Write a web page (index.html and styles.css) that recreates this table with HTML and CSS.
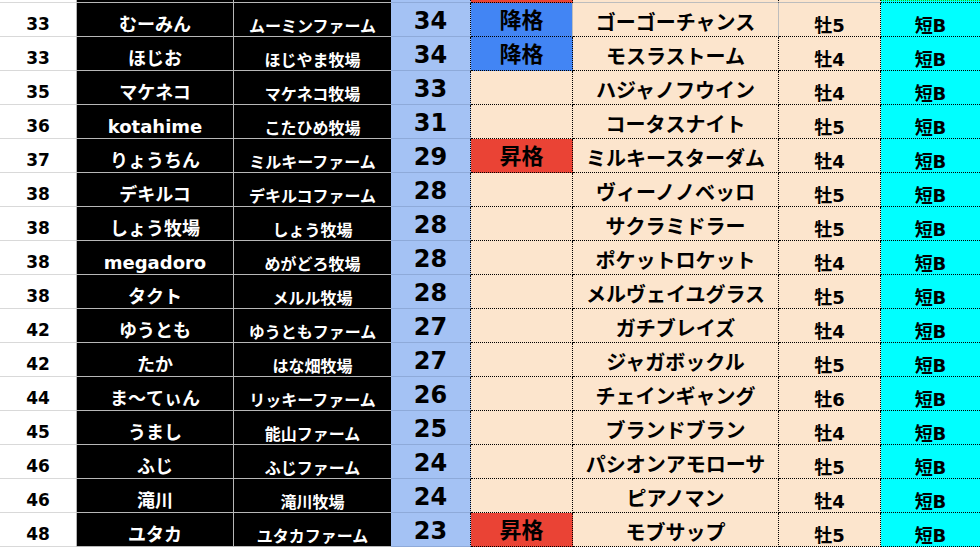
FILE: index.html
```html
<!DOCTYPE html>
<html lang="ja">
<head>
<meta charset="utf-8">
<title>Ranking</title>
<link rel="stylesheet" href="styles.css">
</head>
<body>
<div class="sheet">
  <div class="c a top"></div><div class="c b top"></div><div class="c cc top"></div><div class="c d top"></div><div class="c e up top"></div><div class="c f top"></div><div class="c g top"></div><div class="c h top"></div>

  <div class="c a r1">33</div><div class="c b">むーみん</div><div class="c cc">ムーミンファーム</div><div class="c d">34</div><div class="c e dn r1">降格</div><div class="c f r1">ゴーゴーチャンス</div><div class="c g">牡5</div><div class="c h">短B</div>
  <div class="c a">33</div><div class="c b">ほじお</div><div class="c cc">ほじやま牧場</div><div class="c d">34</div><div class="c e dn">降格</div><div class="c f">モスラストーム</div><div class="c g">牡4</div><div class="c h">短B</div>
  <div class="c a">35</div><div class="c b">マケネコ</div><div class="c cc">マケネコ牧場</div><div class="c d">33</div><div class="c e"></div><div class="c f">ハジャノフウイン</div><div class="c g">牡4</div><div class="c h">短B</div>
  <div class="c a">36</div><div class="c b">kotahime</div><div class="c cc">こたひめ牧場</div><div class="c d">31</div><div class="c e"></div><div class="c f">コータスナイト</div><div class="c g">牡5</div><div class="c h">短B</div>
  <div class="c a">37</div><div class="c b">りょうちん</div><div class="c cc">ミルキーファーム</div><div class="c d">29</div><div class="c e up">昇格</div><div class="c f">ミルキースターダム</div><div class="c g">牡4</div><div class="c h">短B</div>
  <div class="c a">38</div><div class="c b">デキルコ</div><div class="c cc">デキルコファーム</div><div class="c d">28</div><div class="c e"></div><div class="c f">ヴィーノノベッロ</div><div class="c g">牡5</div><div class="c h">短B</div>
  <div class="c a">38</div><div class="c b">しょう牧場</div><div class="c cc">しょう牧場</div><div class="c d">28</div><div class="c e"></div><div class="c f">サクラミドラー</div><div class="c g">牡5</div><div class="c h">短B</div>
  <div class="c a">38</div><div class="c b">megadoro</div><div class="c cc">めがどろ牧場</div><div class="c d">28</div><div class="c e"></div><div class="c f">ポケットロケット</div><div class="c g">牡4</div><div class="c h">短B</div>
  <div class="c a">38</div><div class="c b">タクト</div><div class="c cc">メルル牧場</div><div class="c d">28</div><div class="c e"></div><div class="c f">メルヴェイユグラス</div><div class="c g">牡5</div><div class="c h">短B</div>
  <div class="c a">42</div><div class="c b">ゆうとも</div><div class="c cc">ゆうともファーム</div><div class="c d">27</div><div class="c e"></div><div class="c f">ガチブレイズ</div><div class="c g">牡4</div><div class="c h">短B</div>
  <div class="c a">42</div><div class="c b">たか</div><div class="c cc">はな畑牧場</div><div class="c d">27</div><div class="c e"></div><div class="c f">ジャガボックル</div><div class="c g">牡5</div><div class="c h">短B</div>
  <div class="c a">44</div><div class="c b">ま～てぃん</div><div class="c cc">リッキーファーム</div><div class="c d">26</div><div class="c e"></div><div class="c f">チェインギャング</div><div class="c g">牡6</div><div class="c h">短B</div>
  <div class="c a">45</div><div class="c b">うまし</div><div class="c cc">能山ファーム</div><div class="c d">25</div><div class="c e"></div><div class="c f">ブランドブラン</div><div class="c g">牡4</div><div class="c h">短B</div>
  <div class="c a">46</div><div class="c b">ふじ</div><div class="c cc">ふじファーム</div><div class="c d">24</div><div class="c e"></div><div class="c f">パシオンアモローサ</div><div class="c g">牡5</div><div class="c h">短B</div>
  <div class="c a">46</div><div class="c b">滝川</div><div class="c cc">滝川牧場</div><div class="c d">24</div><div class="c e"></div><div class="c f">ピアノマン</div><div class="c g">牡4</div><div class="c h">短B</div>
  <div class="c a">48</div><div class="c b">ユタカ</div><div class="c cc">ユタカファーム</div><div class="c d">23</div><div class="c e up">昇格</div><div class="c f">モブサップ</div><div class="c g">牡5</div><div class="c h">短B</div>
</div>
</body>
</html>
```
FILE: styles.css
```css
html, body {
  margin: 0;
  padding: 0;
  background: #ffffff;
  overflow: hidden;
}

.sheet {
  display: grid;
  grid-template-columns: 77px 157px 157px 80px 102px 206px 102px 99px;
  grid-template-rows: 3px repeat(16, 34px);
  width: 980px;
  font-family: "Noto Sans CJK JP", "Noto Sans", sans-serif;
  font-weight: 700;
  color: #000;
  line-height: 1;
}

.c {
  box-sizing: border-box;
  display: flex;
  justify-content: center;
  align-items: flex-end;
  white-space: nowrap;
  border-bottom: 1px solid #c0c0c0;
  border-right: 1px solid #c0c0c0;
}

.a, .b, .d, .g, .h {
  font-family: "DejaVu Sans", "Noto Sans CJK JP", sans-serif;
}

.a {
  background: #ffffff;
  border-bottom-color: #d9d9d9;
  border-right-color: #b4b4b4;
  font-size: 17px;
  padding-bottom: 3px;
}

.b {
  background: #000;
  color: #fff;
  border-bottom-color: #b7b7b7;
  border-right-color: #b7b7b7;
  font-size: 18px;
  padding-bottom: 2px;
}

.cc {
  background: #000;
  color: #fff;
  border-bottom-color: #b7b7b7;
  border-right: none;
  font-size: 16px;
  padding-bottom: 3px;
}

.d {
  background: #a4c2f4;
  border-bottom-color: #8eaad9;
  border-right: 1px dotted #000;
  font-size: 24px;
  padding-bottom: 3px;
}

.e {
  background: #fce5cd;
  border-bottom: 1px dotted #000;
  border-right: 1px dotted #000;
  font-size: 22px;
  padding-bottom: 7px;
}

.e.dn { background: #4285f4; }
.e.up { background: #ea4335; }

.f {
  background: #fce5cd;
  border-bottom: 1px dotted #000;
  border-right: 1px dotted #000;
  font-size: 20px;
  padding-bottom: 4px;
}

.g {
  background: #fce5cd;
  border-bottom: 1px dotted #000;
  border-right: 1px dotted #000;
  font-size: 18px;
  padding-bottom: 1px;
}

.h {
  background: #00ffff;
  border-bottom: 1px dotted #000;
  border-right: none;
  font-size: 18px;
  padding-bottom: 1px;
}

.e.r1, .f.r1 { border-right: 1px solid #bdbdbd; }

.top { padding: 0; overflow: hidden; }
.f.top, .g.top { border-bottom: 1px solid #bdbdbd; }
.h.top { border-top: 1px dotted #00e000; }
```
